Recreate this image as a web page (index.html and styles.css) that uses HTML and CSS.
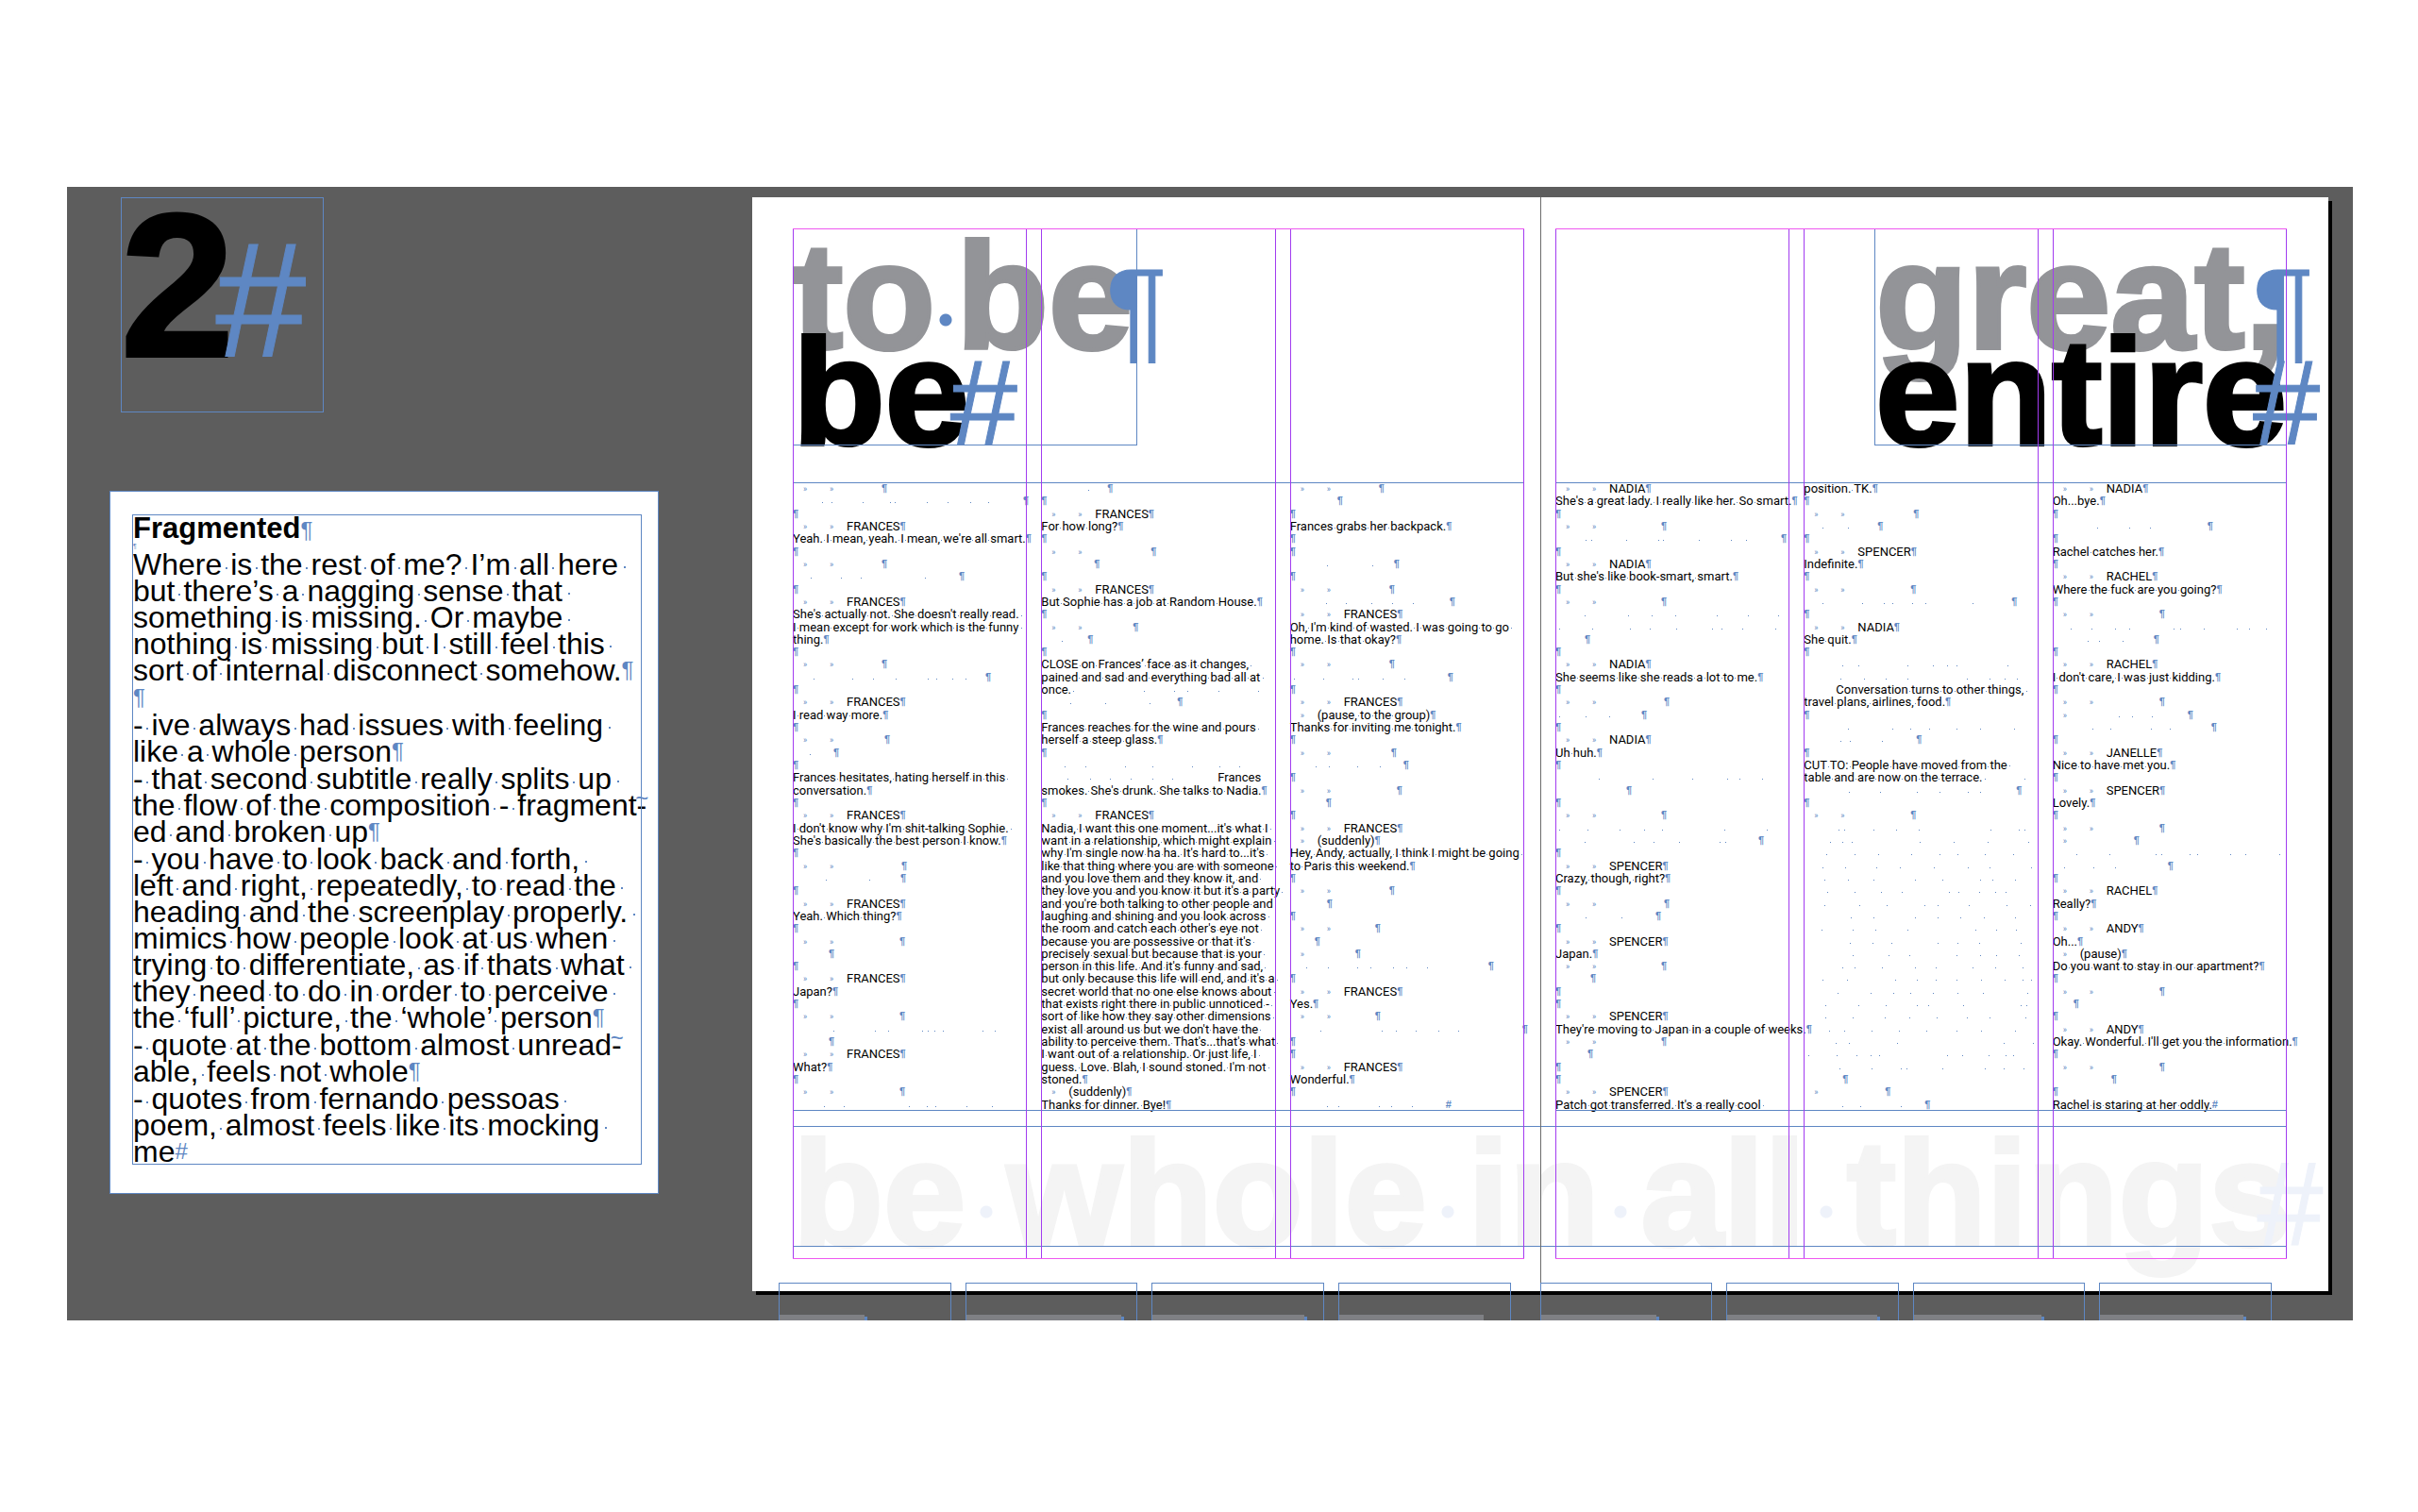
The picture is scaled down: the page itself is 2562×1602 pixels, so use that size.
FILE: index.html
```html
<!DOCTYPE html>
<html lang="en">
<head>
<meta charset="utf-8">
<title>Spread 2: Fragmented</title>
<link rel="stylesheet" href="styles.css">
</head>
<body>
<main class="board">
  <aside class="side">
    <div class="number frame">2<span class="mark">#</span></div>
    <section class="note">
      <div class="note-text frame spaced">
        <h2>Fragmented<span class="mark">¶</span></h2>
        <p class="tiny"></p>
        <p class="c">Where is the rest of me? I’m all here</p>
        <p class="c">but there’s a nagging sense that</p>
        <p class="c">something is missing. Or maybe</p>
        <p class="c">nothing is missing but I still feel this</p>
        <p class="last">sort of internal disconnect somehow.</p>
        <p class="last"></p>
        <p class="c">- ive always had issues with feeling</p>
        <p class="last">like a whole person</p>
        <p class="c">- that second subtitle really splits up</p>
        <p class="h">the flow of the composition - fragment-</p>
        <p class="last">ed and broken up</p>
        <p class="c">- you have to look back and forth,</p>
        <p class="c">left and right, repeatedly, to read the</p>
        <p class="c">heading and the screenplay properly.</p>
        <p class="c">mimics how people look at us when</p>
        <p class="c">trying to differentiate, as if thats what</p>
        <p class="c">they need to do in order to perceive</p>
        <p class="last">the ‘full’ picture, the ‘whole’ person</p>
        <p class="h">- quote at the bottom almost unread-</p>
        <p class="last">able, feels not whole</p>
        <p class="c">- quotes from fernando pessoas</p>
        <p class="c">poem, almost feels like its mocking</p>
        <p class="end">me</p>
      </div>
    </section>
  </aside>

  <article class="spread">
    <header class="titles">
      <h1 class="title frame"><span class="gray">to<i class="bigsp"> </i>be<span class="mark pil">¶</span></span><br>be<span class="mark">#</span></h1>
      <h1 class="title right frame"><span class="gray">great,<span class="mark pil">¶</span></span><br>entire<span class="mark">#</span></h1>
    </header>

    <div class="script">
      <div class="text frame">
        <div class="col spaced">
          <p class="who" data-end="94"></p>
          <p data-dots="31 41 74 103 108 142 164 188 207" data-end="244"></p>
          <p></p>
          <p class="who">FRANCES</p>
          <p>Yeah. I mean, yeah. I mean, we're all smart.</p>
          <p></p>
          <p class="who" data-end="94"></p>
          <p data-dots="19 51 72 140" data-end="176"></p>
          <p></p>
          <p class="who">FRANCES</p>
          <p class="c">She's actually not. She doesn't really read.</p>
          <p class="c">I mean except for work which is the funny</p>
          <p>thing.</p>
          <p></p>
          <p class="who" data-end="94"></p>
          <p data-dots="22 63 85 109 143 152 169 183" data-end="204"></p>
          <p></p>
          <p class="who">FRANCES</p>
          <p>I read way more.</p>
          <p></p>
          <p class="who" data-end="97"></p>
          <p data-dots="18" data-end="43"></p>
          <p></p>
          <p class="c">Frances hesitates, hating herself in this</p>
          <p>conversation.</p>
          <p></p>
          <p class="who">FRANCES</p>
          <p class="c">I don't know why I'm shit-talking Sophie.</p>
          <p>She's basically the best person I know.</p>
          <p></p>
          <p class="who" data-end="115"></p>
          <p data-dots="35 81" data-end="114"></p>
          <p></p>
          <p class="who">FRANCES</p>
          <p>Yeah. Which thing?</p>
          <p></p>
          <p class="who" data-end="113"></p>
          <p data-end="38"></p>
          <p></p>
          <p class="who">FRANCES</p>
          <p>Japan?</p>
          <p></p>
          <p class="who" data-end="113"></p>
          <p class="open" data-dots="43 87 101 137 143 150 159 201 214"></p>
          <p data-end="38"></p>
          <p class="who">FRANCES</p>
          <p>What?</p>
          <p></p>
          <p class="who" data-end="113"></p>
          <p class="open" data-dots="33 54 123 142 151 184 211"></p>
        </div>
        <div class="col spaced">
          <p data-dots="50" data-end="70"></p>
          <p></p>
          <p class="who">FRANCES</p>
          <p>For how long?</p>
          <p></p>
          <p class="who" data-end="116"></p>
          <p data-end="56"></p>
          <p></p>
          <p class="who">FRANCES</p>
          <p>But Sophie has a job at Random House.</p>
          <p></p>
          <p class="who" data-end="97"></p>
          <p data-dots="22" data-end="49"></p>
          <p></p>
          <p class="c">CLOSE on Frances’ face as it changes,</p>
          <p class="c">pained and sad and everything bad all at</p>
          <p class="c" data-dots="109 141 155 188 230">once.</p>
          <p data-dots="31 68 115" data-end="144"></p>
          <p></p>
          <p class="c">Frances reaches for the wine and pours</p>
          <p>herself a steep glass.</p>
          <p></p>
          <p class="open" data-dots="25 47 89 118 160 189 210"></p>
          <p class="open far" data-dots="28 52 73 95 118 139">Frances</p>
          <p>smokes. She's drunk. She talks to Nadia.</p>
          <p></p>
          <p class="who">FRANCES</p>
          <p class="c">Nadia, I want this one moment...it's what I</p>
          <p class="c">want in a relationship, which might explain</p>
          <p class="c">why I'm single now ha ha. It's hard to...it's</p>
          <p class="c">like that thing where you are with someone</p>
          <p class="c">and you love them and they know it, and</p>
          <p class="c">they love you and you know it but it's a party</p>
          <p class="c">and you're both talking to other people and</p>
          <p class="c">laughing and shining and you look across</p>
          <p class="c">the room and catch each other's eye not</p>
          <p class="c">because you are possessive or that it's</p>
          <p class="c">precisely sexual but because that is your</p>
          <p class="c">person in this life. And it's funny and sad,</p>
          <p class="c">but only because this life will end, and it's a</p>
          <p class="c">secret world that no one else knows about</p>
          <p class="c">that exists right there in public unnoticed -</p>
          <p class="c">sort of like how they say other dimensions</p>
          <p class="c">exist all around us but we don't have the</p>
          <p class="c">ability to perceive them. That's...that's what</p>
          <p class="c">I want out of a relationship. Or just life, I</p>
          <p class="c">guess. Love. Blah, I sound stoned. I'm not</p>
          <p>stoned.</p>
          <p class="aside">(suddenly)</p>
          <p>Thanks for dinner. Bye!</p>
        </div>
        <div class="col spaced">
          <p class="who" data-end="94"></p>
          <p data-end="50"></p>
          <p></p>
          <p>Frances grabs her backpack.</p>
          <p></p>
          <p></p>
          <p data-dots="39 87" data-end="110"></p>
          <p></p>
          <p class="who" data-end="105"></p>
          <p data-dots="38 59 86 108 130" data-end="169"></p>
          <p class="who">FRANCES</p>
          <p class="c">Oh, I'm kind of wasted. I was going to go</p>
          <p>home. Is that okay?</p>
          <p></p>
          <p class="who" data-end="105"></p>
          <p data-dots="4 35 66 72 98 121" data-end="167"></p>
          <p></p>
          <p class="who">FRANCES</p>
          <p class="aside">(pause, to the group)</p>
          <p>Thanks for inviting me tonight.</p>
          <p></p>
          <p class="who" data-end="107"></p>
          <p data-dots="27 41 71 95" data-end="120"></p>
          <p></p>
          <p class="who" data-end="113"></p>
          <p data-end="38"></p>
          <p></p>
          <p class="who">FRANCES</p>
          <p class="aside">(suddenly)</p>
          <p class="c">Hey, Andy, actually, I think I might be going</p>
          <p>to Paris this weekend.</p>
          <p></p>
          <p class="who" data-end="105"></p>
          <p data-end="39"></p>
          <p></p>
          <p class="who" data-end="90"></p>
          <p data-end="26"></p>
          <p class="aside" data-end="69"></p>
          <p data-dots="17 40 71 85 109 123 145" data-end="210"></p>
          <p></p>
          <p class="who">FRANCES</p>
          <p>Yes.</p>
          <p class="who" data-end="90"></p>
          <p data-dots="32 97 112 133 157 178" data-end="246"></p>
          <p></p>
          <p></p>
          <p class="who">FRANCES</p>
          <p>Wonderful.</p>
          <p></p>
          <p class="end" data-dots="39 51 94 107 129" data-end="165"></p>
        </div>
      </div>

      <div class="text frame">
        <div class="col spaced">
          <p class="who">NADIA</p>
          <p>She's a great lady. I really like her. So smart.</p>
          <p></p>
          <p class="who" data-end="112"></p>
          <p data-dots="32 38 75 109 114 152 186 202" data-end="239"></p>
          <p></p>
          <p class="who">NADIA</p>
          <p>But she's like book-smart, smart.</p>
          <p></p>
          <p class="who" data-end="112"></p>
          <p class="open" data-dots="31 77 102 127 171 204 236"></p>
          <p class="open" data-dots="4 39 79 100 128 166 176 198 233"></p>
          <p data-end="31"></p>
          <p></p>
          <p class="who">NADIA</p>
          <p>She seems like she reads a lot to me.</p>
          <p></p>
          <p class="who" data-end="115"></p>
          <p data-dots="4 32 57" data-end="91"></p>
          <p></p>
          <p class="who">NADIA</p>
          <p>Uh huh.</p>
          <p></p>
          <p class="open" data-dots="46 103 145 182 195 219"></p>
          <p data-end="75"></p>
          <p></p>
          <p class="who" data-end="112"></p>
          <p class="open" data-dots="4 34 68 94 113 179 224"></p>
          <p data-dots="31 83 104 131 174 180" data-end="215"></p>
          <p></p>
          <p class="who">SPENCER</p>
          <p>Crazy, though, right?</p>
          <p></p>
          <p class="who" data-end="115"></p>
          <p data-dots="32 70" data-end="106"></p>
          <p></p>
          <p class="who">SPENCER</p>
          <p>Japan.</p>
          <p class="who" data-end="112"></p>
          <p data-end="37"></p>
          <p></p>
          <p></p>
          <p class="who">SPENCER</p>
          <p>They're moving to Japan in a couple of weeks.</p>
          <p class="who" data-end="112"></p>
          <p data-end="34"></p>
          <p></p>
          <p></p>
          <p class="who">SPENCER</p>
          <p class="c">Patch got transferred. It's a really cool</p>
        </div>
        <div class="col spaced">
          <p>position. TK.</p>
          <p></p>
          <p class="who" data-end="116"></p>
          <p data-dots="20 47" data-end="78"></p>
          <p></p>
          <p class="who">SPENCER</p>
          <p>Indefinite.</p>
          <p></p>
          <p class="who" data-end="113"></p>
          <p data-dots="20 62 85 94 115 129 179" data-end="220"></p>
          <p></p>
          <p class="who">NADIA</p>
          <p>She quit.</p>
          <p></p>
          <p class="open" data-dots="41 58 110 137 152 162 216"></p>
          <p class="open" data-dots="39 64 87 110 173 197 213 226"></p>
          <p class="c indent">Conversation turns to other things,</p>
          <p>travel plans, airlines, food.</p>
          <p></p>
          <p class="open" data-dots="47 94 113 133 162 187 223"></p>
          <p data-dots="39 49 83" data-end="119"></p>
          <p></p>
          <p class="c">CUT TO: People have moved from the</p>
          <p class="c" data-dots="234">table and are now on the terrace.</p>
          <p data-dots="48 81 120 144 174 187" data-end="225"></p>
          <p></p>
          <p class="who" data-end="113"></p>
          <p class="open" data-dots="37 43 74 98 122 198 228 234"></p>
          <p class="open" data-dots="28 41 51 123 159 195 238"></p>
          <p class="open" data-dots="24 54 79 114 144 163 192 222"></p>
          <p class="open" data-dots="20 44 77 102 138 174 197 241"></p>
          <p class="open" data-dots="22 47 74 118 147 187 200 224"></p>
          <p class="open" data-dots="25 54 82 104 154 164 186 203 214"></p>
          <p class="open" data-dots="22 59 88 128 142 175 215 240"></p>
          <p class="open" data-dots="50 74 118 142 166 191 224"></p>
          <p class="open" data-dots="19 52 76 110 182 204 225"></p>
          <p class="open" data-dots="49 73 93 142 163 186 230"></p>
          <p class="open" data-dots="52 90 112 162 187 204 228"></p>
          <p class="open" data-dots="41 54 83 118 140 179 203 232"></p>
          <p class="open" data-dots="20 46 97 120 140 162 188 213 232 241"></p>
          <p class="open" data-dots="36 71 95 113 137 163 190 237"></p>
          <p class="open" data-dots="23 58 87 120 132 169 230 236"></p>
          <p class="open" data-dots="23 52 86 112 141 173 197 235"></p>
          <p class="open" data-dots="27 43 72 101 130 162 188 224"></p>
          <p class="open" data-dots="34 48 99 212 243"></p>
          <p class="open" data-dots="5 35 56 71 80 152 168 196 214 222"></p>
          <p class="open" data-dots="38 72 103 109 147 192 212 233"></p>
          <p data-end="41"></p>
          <p class="aside" data-end="86"></p>
          <p data-dots="41 60 103" data-end="128"></p>
        </div>
        <div class="col spaced">
          <p class="who">NADIA</p>
          <p>Oh...bye.</p>
          <p></p>
          <p data-dots="47 81 103" data-end="164"></p>
          <p></p>
          <p>Rachel catches her.</p>
          <p></p>
          <p class="who">RACHEL</p>
          <p>Where the fuck are you going?</p>
          <p></p>
          <p class="who" data-end="113"></p>
          <p class="open" data-dots="19 41 66 81 128 135 160 195 208 226"></p>
          <p data-dots="37 49 74" data-end="107"></p>
          <p></p>
          <p class="who">RACHEL</p>
          <p>I don't care, I was just kidding.</p>
          <p></p>
          <p class="who" data-end="113"></p>
          <p class="aside" data-dots="70 84 105" data-end="143"></p>
          <p data-dots="42 61 104 124" data-end="168"></p>
          <p></p>
          <p class="who">JANELLE</p>
          <p>Nice to have met you.</p>
          <p></p>
          <p class="who">SPENCER</p>
          <p>Lovely.</p>
          <p></p>
          <p class="who" data-end="113"></p>
          <p class="aside" data-end="86"></p>
          <p class="open" data-dots="25 60 109 115 145 153 188 204 240"></p>
          <p data-dots="12 43 66" data-end="122"></p>
          <p></p>
          <p class="who">RACHEL</p>
          <p>Really?</p>
          <p></p>
          <p class="who">ANDY</p>
          <p>Oh...</p>
          <p class="aside">(pause)</p>
          <p>Do you want to stay in our apartment?</p>
          <p></p>
          <p class="who" data-end="113"></p>
          <p data-end="22"></p>
          <p></p>
          <p class="who">ANDY</p>
          <p>Okay. Wonderful. I'll get you the information.</p>
          <p></p>
          <p class="who" data-end="113"></p>
          <p data-end="62"></p>
          <p></p>
          <p class="end">Rachel is staring at her oddly.</p>
        </div>
      </div>
    </div>

    <p class="quote frame">be<i class="bigsp"> </i>whole<i class="bigsp"> </i>in<i class="bigsp"> </i>all<i class="bigsp"> </i>things<span class="mark">#</span></p>

    <div class="guides" aria-hidden="true">
      <div class="guide"><i></i><i></i><i></i></div>
      <div class="guide"><i></i><i></i><i></i></div>
    </div>
  </article>

  <div class="strip">
    <div class="group">
      <div class="cell"><i style="width:50%"></i></div>
      <div class="cell"><i style="width:91%"></i></div>
      <div class="cell"><i style="width:89%"></i></div>
      <div class="cell plain"><i style="width:85%"></i></div>
    </div>
    <div class="group">
      <div class="cell"><i style="width:68%"></i></div>
      <div class="cell"><i style="width:88%"></i></div>
      <div class="cell"><i style="width:75%"></i></div>
      <div class="cell"><i style="width:84%"></i></div>
    </div>
  </div>
</main>
<script src="marks.js"></script>
</body>
</html>
```
FILE: styles.css
```css
:root {
  --blue: #5e87c3;
  --violet: #a23cf0;
  --magenta: #ee58f0;
}

* { box-sizing: border-box; }

body {
  margin: 0;
  background: #fff;
  color: #000;
  font-family: "Liberation Sans", Arial, sans-serif;
}

h1, h2, p { margin: 0; font-weight: inherit; }
i { font-style: normal; }

.board {
  display: grid;
  grid-template-columns: minmax(0, 726fr) minmax(0, 1670fr) 26px;
  grid-template-rows: auto 31px;
  margin: 198px 69px 203px 71px;
  padding-top: 11px;
  background: #5d5d5d;
  overflow: hidden;
}

/* Text frames: the outline is drawn over the type */
.frame { position: relative; }
.frame::after {
  content: "";
  position: absolute;
  inset: 0;
  border: 1px solid var(--blue);
  pointer-events: none;
}

/* End marks take no room in the line and overlap the last letter */
.mark {
  display: inline-block;
  width: 0;
  margin: 0 20px 0 -20px;
  color: var(--blue);
  font-weight: 400;
  font-size: 80%;
  line-height: 0;
  -webkit-text-stroke: 1px currentColor;
}
.mark.pil { margin: 0 28px 0 -28px; font-size: 75%; }

/* Left pasteboard */
.side { grid-row: 1 / 3; }

.number {
  width: 215px;
  height: 228px;
  margin-left: 57px;
  font-size: 216px;
  line-height: 186px;
  font-weight: 700;
}

.number, .title, .quote { -webkit-text-stroke: 4px currentColor; }

.note {
  margin: 83px 99px 0 45px;
  padding: 24px 17px 30px 23px;
  background: #fff;
  border: 1px solid var(--blue);
}

.note-text {
  padding: 1px 0 0 1px;
  font-size: 32px;
  line-height: 28px;
}
.note-text h2 { font-size: 31px; font-weight: 700; }
.note-text h2 .mark {
  margin: 0;
  font-size: 24px;
  -webkit-text-stroke: 0;
}
.note-text p { min-height: 28px; white-space: nowrap; }
.note-text .last { margin-bottom: 1px; }
.note-text .tiny { min-height: 10px; font-size: 9px; line-height: 10px; }

.spaced p::after {
  content: "¶";
  position: absolute;
  color: var(--blue);
  font-size: 75%;
}
.spaced .end::after { content: "#"; }
.spaced .h::after { content: "~"; margin-left: -12px; margin-top: -7px; }
.spaced .open::after { content: none; }

.sp, .spaced .c::after {
  background: linear-gradient(var(--blue), var(--blue)) center 62% / 2px 2px no-repeat;
}
.spaced .c::after { content: "\a0\a0"; }

/* Page spread */
.spread {
  position: relative;
  padding: 33px 44px 47px 43px;
  background: #fff;
  box-shadow: 4px 4px 0 #000;
}
.spread::after {
  content: "";
  position: absolute;
  inset: 0 auto 0 50%;
  border-left: 1px solid #6c6c6c;
}

.titles {
  display: flex;
  justify-content: space-between;
}
.title {
  width: 365px;
  height: 230px;
  padding-top: 21px;
  font-size: 160px;
  line-height: 102px;
  font-weight: 700;
  white-space: nowrap;
}
.title.right { width: 437px; text-align: right; }
.title.right .mark, .quote .mark { margin: 0 36px 0 -36px; }
.gray { color: #939498; }

.bigsp {
  background: radial-gradient(circle, var(--blue) 6px, transparent 7px) center 62% / 14px 14px no-repeat;
}
.title .bigsp {
  font-size: 80px;
  line-height: 0;
  background-position: center 46%;
}

.script {
  display: grid;
  grid-template-columns: 1fr 1fr;
  gap: 33px;
  margin-top: 39px;
}
.text {
  display: grid;
  grid-template-columns: repeat(3, minmax(0, 1fr));
  gap: 15px;
  min-height: 666px;
}
.col {
  display: grid;
  grid-auto-rows: minmax(13px, 1fr);
  font-family: Roboto, "Liberation Sans", sans-serif;
  font-size: 13px;
  line-height: 13px;
}
.col p {
  position: relative;
  min-height: 13px;
  white-space: nowrap;
}
.col p::after {
  font-family: "Liberation Sans", sans-serif;
  font-weight: 700;
  margin-left: var(--end, 0);
}
.col p:not(.c)::after { font-size: 11px; }
.col .sp, .col .c::after {
  background-size: 1px 1px;
}
.col .far { padding-left: 187px; }
.col .indent { padding-left: 34px; }
.col .who:not(:empty) { padding-left: 57px; }
.col .aside:not(:empty):not([data-dots]) { padding-left: 29px; }
.col .who::before, .col .aside::before {
  content: "»";
  position: absolute;
  left: 11px;
  top: 1px;
  width: 40px;
  white-space: pre;
  tab-size: 28px;
  color: var(--blue);
  font-size: 9px;
}
.col .who::before { content: "»\9»"; }

.dot {
  position: absolute;
  top: 8px;
  width: 1px;
  height: 1px;
  background: var(--blue);
}

.quote {
  height: 128px;
  margin-top: 16px;
  padding-top: 21px;
  color: #f4f4f4;
  font-size: 157px;
  line-height: 102px;
  font-weight: 700;
  white-space: nowrap;
}
.quote .mark { color: #eef2fa; }
.quote .bigsp {
  background-image: radial-gradient(circle, #eef2fa 6px, transparent 7px);
}

/* Margin and column guides lie over the artwork */
.guides {
  position: absolute;
  inset: 33px 44px 34px 43px;
  display: grid;
  grid-template-columns: 1fr 1fr;
  gap: 33px;
  pointer-events: none;
}
.guide {
  display: grid;
  grid-template-columns: repeat(3, 1fr);
  gap: 15px;
  border: solid var(--magenta);
  border-width: 1px 0;
}
.guide i {
  border: solid var(--violet);
  border-width: 0 1px;
}

/* Frames that run off the bottom of the pasteboard */
.strip {
  position: relative;
  grid-column: 2;
  display: grid;
  grid-template-columns: 1fr 1fr;
  gap: 31px;
  height: 44px;
  margin-top: -9px;
  padding: 0 60px 0 28px;
}
.group {
  display: grid;
  grid-template-columns: repeat(4, 1fr);
  gap: 15px;
}
.cell {
  display: flex;
  padding-top: 33px;
  border: 1px solid var(--blue);
}
.cell i { background: #7f8084; }
.cell::after {
  content: "";
  width: 3px;
  margin-top: 2px;
  background: var(--blue);
}
.cell.plain::after { content: none; }
```
FILE: marks.js
```js
// Shows hidden characters: word spaces get a dot, blank runs get theirs at data-dots.
document.querySelectorAll('.spaced p').forEach(function (p) {
  var words = p.textContent.split(' ');
  if (words.length > 1) {
    p.textContent = '';
    words.forEach(function (word, n) {
      if (n) {
        var space = document.createElement('span');
        space.className = 'sp';
        space.textContent = ' ';
        p.append(space);
      }
      p.append(word);
    });
  }
  (p.dataset.dots || '').split(' ').filter(Boolean).forEach(function (x) {
    var dot = document.createElement('i');
    dot.className = 'dot';
    dot.style.left = x + 'px';
    p.append(dot);
  });
  if (p.dataset.end) p.style.setProperty('--end', p.dataset.end + 'px');
});
```
